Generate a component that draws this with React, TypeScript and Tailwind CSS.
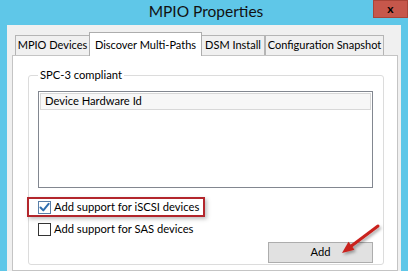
import { ReactNode } from "react";

const FONT = { fontFamily: 'Lato, "Noto Sans", sans-serif' };

interface TabProps {
  label: string;
  width: string;
  active?: boolean;
}

function Tab({ label, width, active }: TabProps) {
  if (active) {
    return (
      <div
        className={`${width} h-[24px] -mx-[1px] -mb-[1px] relative z-10 bg-white border border-b-0 border-[#adadad] flex items-start justify-center pt-[4px] text-[11px] text-black whitespace-nowrap`}
      >
        {label}
      </div>
    );
  }
  return (
    <div
      className={`${width} h-[20px] bg-[#f0f0f0] border border-b-0 border-[#b5b5b5] flex items-center justify-center text-[11px] text-black whitespace-nowrap`}
    >
      {label}
    </div>
  );
}

function CheckBox({ checked }: { checked?: boolean }) {
  return (
    <div
      className={`w-[13px] h-[13px] shrink-0 bg-white border flex items-center justify-center ${
        checked ? "border-[#5a7fa8]" : "border-[#333333]"
      }`}
    >
      {checked && (
        <svg width="11" height="11" viewBox="0 0 11 11">
          <path
            d="M1.5 5.5 L4.3 8.4 L9.6 1.8"
            fill="none"
            stroke="#2f6fb0"
            strokeWidth="2"
            strokeLinecap="round"
            strokeLinejoin="round"
          />
        </svg>
      )}
    </div>
  );
}

function Row({ children }: { children: ReactNode }) {
  return (
    <div className="flex items-center gap-[3px] text-[11.2px] text-black whitespace-nowrap">
      {children}
    </div>
  );
}

export default function App() {
  return (
    <div
      className="w-[408px] h-[271px] bg-[#5fc7e8] flex flex-col overflow-hidden relative"
      style={FONT}
    >
      {/* title bar */}
      <div className="h-[25px] shrink-0 relative flex items-center justify-center">
        <span className="text-[15.5px] text-[#111] -mt-[2px] ml-[4px]">MPIO Properties</span>
        <div className="absolute right-0 top-0 w-[35px] h-[18px] bg-[#c6574b] border border-[#a94438] flex items-center justify-center">
          <span className="text-[12px] font-bold text-black leading-none">x</span>
        </div>
      </div>

      {/* window body */}
      <div className="flex-1 mx-[7px] bg-[#f0f0f0] pl-[5px] pr-[3px] pt-[8px] flex flex-col">
        <div className="h-[22px] flex items-end pl-[3px]">
          <Tab label="MPIO Devices" width="w-[75px]" />
          <Tab label="Discover Multi-Paths" width="w-[113px]" active />
          <Tab label="DSM Install" width="w-[64px]" />
          <Tab label="Configuration Snapshot" width="w-[119px]" />
        </div>

        <div className="flex-1 bg-white border border-[#c4c4c4] pl-[15px] pr-[13px] pt-[11px]">
          <fieldset className="border border-[#dcdcdc] rounded-[3px] pl-[9px] pr-[10px] pb-[3px] h-[198px]">
            <legend className="text-[11.2px] text-black px-[2px] ml-[0px] leading-[16px]">
              SPC-3 compliant
            </legend>

            <div className="mt-[8px] h-[97px] border border-[#828790] p-[1px]">
              <div className="h-[17px] bg-[#f7f7f7] border border-[#d8d8d8] flex items-center pl-[4px] text-[11.2px] text-black">
                Device Hardware Id
              </div>
            </div>

            <div className="mt-[9px] -ml-[11px] w-[178px] h-[20px] border-2 border-[#b3262c] pl-[9px] flex items-center shadow-[2px_2px_4px_rgba(0,0,0,0.25)]">
              <Row>
                <CheckBox checked />
                <span>Add support for iSCSI devices</span>
              </Row>
            </div>

            <div className="mt-[4px] h-[17px] flex items-center">
              <Row>
                <CheckBox />
                <span>Add support for SAS devices</span>
              </Row>
            </div>

            <div className="mt-[4px] flex justify-end">
              <button className="w-[105px] h-[21px] bg-[#e1e1e1] border border-[#adadad] text-[11.2px] text-black flex items-center justify-center">
                Add
              </button>
            </div>
          </fieldset>
        </div>
      </div>

      {/* red callout arrow */}
      <svg
        className="absolute left-[335px] top-[218px]"
        width="50"
        height="42"
        viewBox="335 218 50 42"
      >
        <defs>
          <filter id="sh" x="-30%" y="-30%" width="160%" height="160%">
            <feDropShadow dx="1.5" dy="2" stdDeviation="1.5" floodColor="#000" floodOpacity="0.35" />
          </filter>
        </defs>
        <g filter="url(#sh)">
          <line x1="378" y1="226" x2="350" y2="247" stroke="#c9201c" strokeWidth="3" strokeLinecap="round" />
          <polygon points="342,253 354.5,249.7 348.5,241.7" fill="#c9201c" />
        </g>
      </svg>
    </div>
  );
}
